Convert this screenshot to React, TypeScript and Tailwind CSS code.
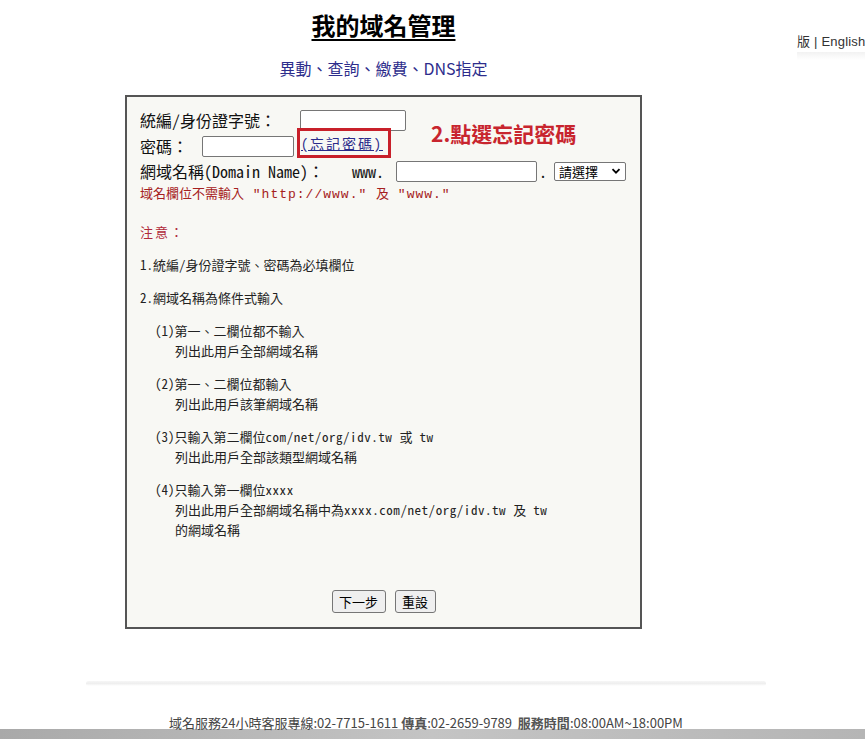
import React from "react";

const cjk = '"Noto Sans CJK TC", "Noto Sans", sans-serif';
const mono = '"Noto Sans Mono CJK TC", "Liberation Mono", "Noto Sans CJK TC", monospace';
const cour = '"Liberation Mono", "Noto Sans Mono CJK TC", monospace';

function Note({ children }: { children: React.ReactNode }) {
  return <div className="pl-[15px]">{children}</div>;
}

function L({ children }: { children: React.ReactNode }) {
  return <span className="tracking-[0.55px]">{children}</span>;
}

export default function App() {
  return (
    <div className="w-[865px] h-[752px] bg-white overflow-hidden relative" style={{ fontFamily: cjk }}>
      <div className="flex">
        {/* main column */}
        <div className="w-[767px] flex flex-col items-center">
          <div className="pt-[10px] leading-[30px] text-[24px] font-bold text-black underline decoration-2 underline-offset-[4px]">
            我的域名管理
          </div>
          <div className="mt-[16px] leading-[24px] text-[16px] text-[#2d2d8c] font-normal">
            異動、查詢、繳費、DNS指定
          </div>

          {/* form box */}
          <div className="relative mt-[15px] w-[517px] h-[534px] border-2 border-[#555555] bg-[#f8f8f4] pl-[13px] pt-[10px] flex flex-col" style={{ fontFamily: mono }}>
            {/* annotation */}
            <div className="absolute left-[304px] top-[23px] text-[21px] font-bold text-[#c8252e] leading-[26px]" style={{ fontFamily: cjk }}>
              2.點選忘記密碼
            </div>

            <div className="h-[26px] flex items-center text-[16px] leading-[20px] text-[#111]">
              <span className="w-[160px]">統編/身份證字號：</span>
              <div className="w-[106px] h-[21px] bg-white border border-[#767676] rounded-[2px]" />
            </div>
            <div className="h-[26px] flex items-center text-[16px] leading-[20px] text-[#111]">
              <span className="w-[62px]">密碼：</span>
              <div className="w-[92px] h-[21px] bg-white border border-[#767676] rounded-[2px]" />
              <div className="ml-[3px] self-start mt-[-5px] w-[94px] h-[30px] border-[3px] border-[#c8202a] flex items-center pl-[1px]">
                <span className="text-[14px] leading-[18px] text-[#2a2a8a] underline tracking-[2px]">(忘記密碼)</span>
              </div>
            </div>
            <div className="h-[24px] flex items-center text-[16px] leading-[18px] text-[#111] whitespace-pre">
              <span>網域名稱(Domain Name)：</span>
              <span className="ml-[28px]">www.</span>
              <div className="ml-[12px] w-[141px] h-[21px] bg-white border border-[#767676] rounded-[2px]" />
              <span className="ml-[2px] mr-[7px]">.</span>
              <div className="w-[72px] h-[19px] bg-white border border-[#767676] rounded-[2px] flex items-center justify-between px-[4px] text-[13px] leading-[17px] text-black" style={{ fontFamily: cjk }}>
                <span>請選擇</span>
                <svg width="10" height="10" viewBox="0 0 10 10">
                  <path d="M1.5 3.2 L5 6.7 L8.5 3.2" fill="none" stroke="#000" strokeWidth="1.8" />
                </svg>
              </div>
            </div>
            <div className="mt-[2px] h-[16px] leading-[16px] text-[13px] text-[#a52020] whitespace-pre">
              域名欄位不需輸入<span style={{ fontFamily: cour }} className="tracking-[1px]"> "http://www." </span>及<span style={{ fontFamily: cour }} className="tracking-[1px]"> "www."</span>
            </div>

            <div className="mt-[21px] text-[13px] leading-[20px] text-[#222] flex flex-col gap-[13px]">
              <div className="text-[#b02a3a] tracking-[2px]">注意：</div>
              <div>1.統編/身份證字號、密碼為必填欄位</div>
              <div>2.網域名稱為條件式輸入</div>
              <Note>
                <div>(1)第一、二欄位都不輸入</div>
                <div className="pl-[20px]">列出此用戶全部網域名稱</div>
              </Note>
              <Note>
                <div>(2)第一、二欄位都輸入</div>
                <div className="pl-[20px]">列出此用戶該筆網域名稱</div>
              </Note>
              <Note>
                <div>(3)只輸入第二欄位<L>com/net/org/idv.tw </L>或<L> tw</L></div>
                <div className="pl-[20px]">列出此用戶全部該類型網域名稱</div>
              </Note>
              <Note>
                <div>(4)只輸入第一欄位<L>xxxx</L></div>
                <div className="pl-[20px]">列出此用戶全部網域名稱中為<L>xxxx.com/net/org/idv.tw </L>及<L> tw</L></div>
                <div className="pl-[20px]">的網域名稱</div>
              </Note>
            </div>

            <div className="mt-auto mb-[14px] mr-[13px] flex justify-center gap-[9px]" style={{ fontFamily: cjk }}>
              <button className="w-[54px] h-[23px] bg-[#efefef] border border-[#767676] rounded-[3px] text-[13px] text-black">
                下一步
              </button>
              <button className="w-[41px] h-[23px] bg-[#efefef] border border-[#767676] rounded-[3px] text-[13px] text-black">
                重設
              </button>
            </div>
          </div>
        </div>

        {/* right header strip */}
        <div className="w-[98px] pt-[34px] pl-[30px] flex flex-col">
          <div className="whitespace-nowrap text-[13px] leading-[16px] text-[#333] tracking-[0.2px]" style={{ fontFamily: '"Liberation Sans", "Noto Sans CJK TC", sans-serif' }}>
            版 | English
          </div>
          <div className="mt-[2px] h-[8px] bg-gradient-to-b from-[#f2f2f2] to-white" />
        </div>
      </div>

      {/* footer */}
      <div className="w-[852px] flex flex-col items-center">
        <div className="mt-[52px] w-[680px] h-[5px] bg-gradient-to-b from-[#f6f6f6] via-[#efefef] to-white rounded-full" />
        <div className="mt-[29px] leading-[16px] text-[13px] text-[#444]">
          域名服務24小時客服專線:02-7715-1611 <span className="font-bold text-[#555]">傳真</span>:02-2659-9789&nbsp; <span className="font-bold text-[#555]">服務時間</span>:08:00AM~18:00PM
        </div>
      </div>
      <div className="mt-[-2px] h-[10px] w-full bg-gradient-to-r from-[#a9a9a9] via-[#c4c4c4] to-[#b5b5b5]" />
    </div>
  );
}
